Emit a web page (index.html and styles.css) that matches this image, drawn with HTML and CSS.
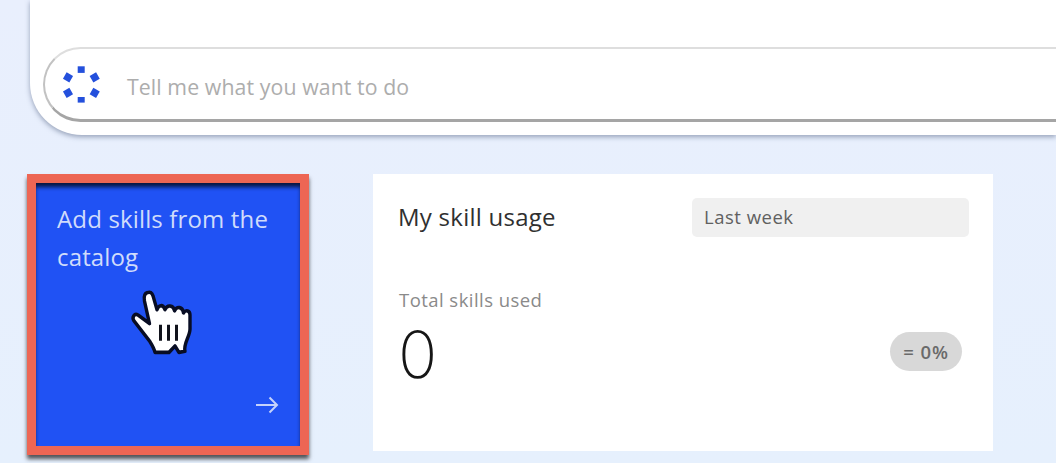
FILE: index.html
```html
<!DOCTYPE html>
<html lang="en">
<head>
<meta charset="utf-8">
<title>Skills</title>
<link rel="stylesheet" href="styles.css">
</head>
<body>
<main class="page">
  <section class="chat">
    <div class="prompt">
      <svg class="prompt-icon" width="40" height="40" viewBox="0 0 40 40" fill="#2450dc">
        <rect x="16.700" y="2.300" width="7" height="6.600"/>
        <rect x="16.700" y="33" width="7" height="5.600"/>
        <rect x="3.300" y="9.700" width="7.400" height="7.400" transform="rotate(30 7 13.400)"/>
        <rect x="30" y="9.700" width="7.400" height="7.400" transform="rotate(-30 33.700 13.400)"/>
        <rect x="3.300" y="25.200" width="7.400" height="7.400" transform="rotate(-30 7 28.900)"/>
        <rect x="30" y="25.200" width="7.400" height="7.400" transform="rotate(30 33.700 28.900)"/>
      </svg>
      <span class="prompt-text">Tell me what you want to do</span>
    </div>
  </section>
  <div class="cards">
    <a class="add-card">
      <span class="add-text">Add skills from the<br>catalog</span>
      <svg class="arrow" width="24" height="18" viewBox="0 0 24 18" fill="none" stroke="#c5d2fb" stroke-width="2"><path d="M1 9H22M14.500 1.500L22 9L14.500 16.500"/></svg>
      <svg class="hand" width="70" height="79" viewBox="0 0 70 74" preserveAspectRatio="none">
        <path d="M22.500 9C19 10 18.700 13 19.500 17L24.500 38L13 30C9.500 28 6.500 32 9 35.500L25 55C27 58 29 61 30 65H44L50 59L54 65L60 64C58 57 65 50 65 43V30C65 26 61 24.500 58.500 28C57.500 22 52 21.500 49.500 26C48.500 20.500 42 20 40 25C38 19.500 33.500 20.500 32 25L28 12C27 9 25 8 22.500 9Z" fill="#fff" stroke="#080d24" stroke-width="3.400" stroke-linejoin="round"/>
        <path d="M35.500 39V54M43.500 39V54M51.500 39V54" stroke="#11131c" stroke-width="3"/>
      </svg>
    </a>
    <section class="usage">
      <header class="usage-head">
        <h2 class="title">My skill usage</h2>
        <div class="period"><span class="period-text">Last week</span></div>
      </header>
      <div class="label">Total skills used</div>
      <div class="stats">
        <span class="count">0</span>
        <span class="change">= 0%</span>
      </div>
    </section>
  </div>
</main>
</body>
</html>
```
FILE: styles.css
```css
* { box-sizing: border-box; }
body {
  margin: 0;
  overflow: hidden;
  background: #fff;
  font-family: "Open Sans", "Noto Sans", sans-serif;
}
.page {
  height: 463px;
  overflow: hidden;
  background: linear-gradient(#e9effd, #e6f0fd);
}
.chat {
  height: 135px;
  margin-left: 30px;
  padding: 47px 0 0 13px;
  background: #fff;
  border-bottom-left-radius: 52px;
  box-shadow: 0 2px 5px rgba(70, 85, 120, .5);
}
.prompt {
  display: flex;
  align-items: center;
  gap: 26px;
  height: 75px;
  padding-left: 16px;
  border: solid;
  border-width: 2px 0 3px 2px;
  border-color: #dedede #dedede #a5a5a5 #c2c2c2;
  border-radius: 38px 0 0 38px;
}
.prompt-text {
  padding-top: 4px;
  font-size: 21.3px;
  letter-spacing: .08px;
  font-weight: 500;
  color: #adadad;
  white-space: nowrap;
}
.cards {
  display: flex;
  gap: 64px;
  padding: 39px 0 0 27px;
}
.add-card {
  position: relative;
  display: flex;
  flex-direction: column;
  justify-content: space-between;
  width: 282px;
  height: 281px;
  padding: 17px 21px 32px;
  border: 9px solid #ed6654;
  background: #2052f4;
  box-shadow: 0 4px 4px rgba(0, 0, 0, .65), inset 0 5px 4px -1px rgba(0, 0, 0, .75);
}
.add-text {
  font-size: 24px;
  letter-spacing: .15px;
  line-height: 38px;
  color: #d0dcfb;
  white-space: nowrap;
}
.arrow { align-self: flex-end; }
.hand {
  position: absolute;
  left: 89px;
  top: 100px;
}
.usage {
  width: 620px;
  height: 277px;
  padding: 24px 24px 0 26px;
  background: #fff;
}
.usage-head {
  display: flex;
  justify-content: space-between;
  align-items: center;
  height: 39px;
}
.title {
  margin: 0 0 2px -1px;
  font-size: 24px;
  letter-spacing: .25px;
  font-weight: 500;
  color: #303030;
}
.period {
  display: flex;
  align-items: center;
  width: 277px;
  height: 39px;
  padding-left: 12px;
  border-radius: 5px;
  background: #f0f0f0;
}
.period-text {
  margin-top: -2px;
  font-size: 18.5px;
  letter-spacing: .5px;
  font-weight: 500;
  color: #606060;
}
.label {
  margin-top: 50px;
  font-size: 18.5px;
  font-weight: 500;
  letter-spacing: .45px;
  line-height: 26px;
  color: #8a8a8a;
}
.stats {
  display: flex;
  justify-content: space-between;
  align-items: center;
  height: 77px;
  padding-right: 7px;
}
.count {
  padding-top: 5px;
  margin-left: -1px;
  font-family: Inter, "Open Sans", sans-serif;
  font-size: 65px;
  font-weight: 250;
  line-height: 77px;
  color: #161616;
}
.change {
  display: grid;
  place-items: center;
  width: 72px;
  height: 39px;
  border-radius: 20px;
  background: #d8d8d8;
  font-size: 18.5px;
  letter-spacing: .9px;
  font-weight: 600;
  color: #6a6a6a;
}
```
